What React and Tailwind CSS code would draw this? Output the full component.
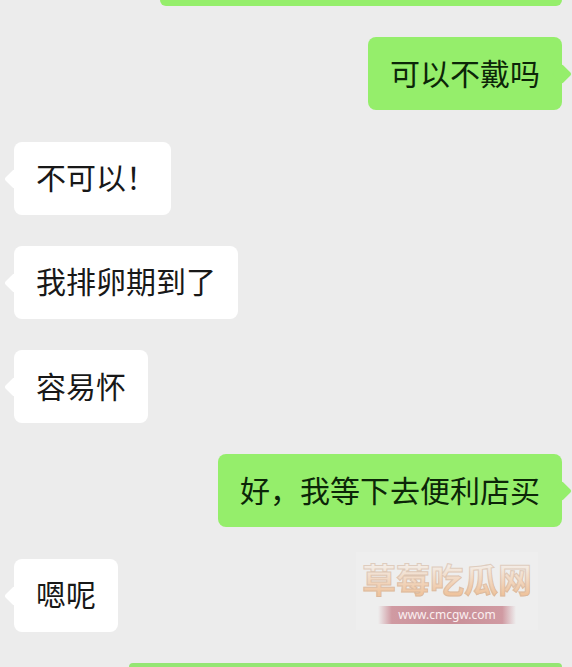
const messages = [
  { id: 1, mine: true, text: '可以不戴吗' },
  { id: 2, mine: false, text: '不可以！' },
  { id: 3, mine: false, text: '我排卵期到了' },
  { id: 4, mine: false, text: '容易怀' },
  { id: 5, mine: true, text: '好，我等下去便利店买' },
  { id: 6, mine: false, text: '嗯呢' },
]

function Bubble({ mine, text }) {
  // a closing mark already carries blank space on its right
  const padding = text.endsWith('！') ? 'pl-[22px] pr-[15px]' : 'px-[22px]'

  return (
    <li
      className={`relative flex h-[73px] items-center rounded-lg pb-1 text-[30px] leading-none whitespace-nowrap ${padding}
                  ${mine ? 'self-end bg-[#95ee6b] text-[#0c2608]' : 'self-start bg-white text-[#181818]'}`}
    >
      {/* Tail */}
      <span
        className={`absolute top-[30px] size-3.5 rotate-45 rounded-[2px]
                    ${mine ? '-right-[7px] bg-[#95ee6b]' : '-left-[7px] bg-white'}`}
      />
      <span className="relative">{text}</span>
    </li>
  )
}

function Watermark() {
  return (
    <div className="absolute right-[34px] bottom-[37px] flex w-[182px] flex-col items-center gap-0.5 bg-white/10 pt-0.5 pb-1.5">
      <span
        className="bg-linear-to-b from-[#f3ebe4] from-25% to-[#efc49e] to-80% bg-clip-text text-[34px] leading-[50px]
                   font-bold whitespace-nowrap text-transparent [-webkit-text-stroke:1px_#c9ad9880]"
      >
        草莓吃瓜网
      </span>
      <span
        className="w-[138px] bg-[linear-gradient(to_right,transparent,#d09aa2_10%,#c98f98_50%,#d09aa2_90%,transparent)]
                   text-center font-['Noto_Sans',sans-serif] text-[12px] leading-[18px] text-[#fbeff0]"
      >
        www.cmcgw.com
      </span>
    </div>
  )
}

export default function App() {
  return (
    <main className="relative min-h-screen bg-[#ececec] font-['Noto_Sans_CJK_SC',sans-serif]">
      <ul className="flex min-h-screen flex-col justify-between pr-2.5 pl-3.5">
        {/* Neighbouring messages scrolled out of view */}
        <li className="h-1.5 w-[402px] self-end rounded-b-lg bg-[#95ee6b]" />
        {messages.map((message) => (
          <Bubble key={message.id} mine={message.mine} text={message.text} />
        ))}
        <li className="h-1 w-[433px] self-end rounded-t-lg bg-[#95e673]" />
      </ul>
      <Watermark />
    </main>
  )
}
